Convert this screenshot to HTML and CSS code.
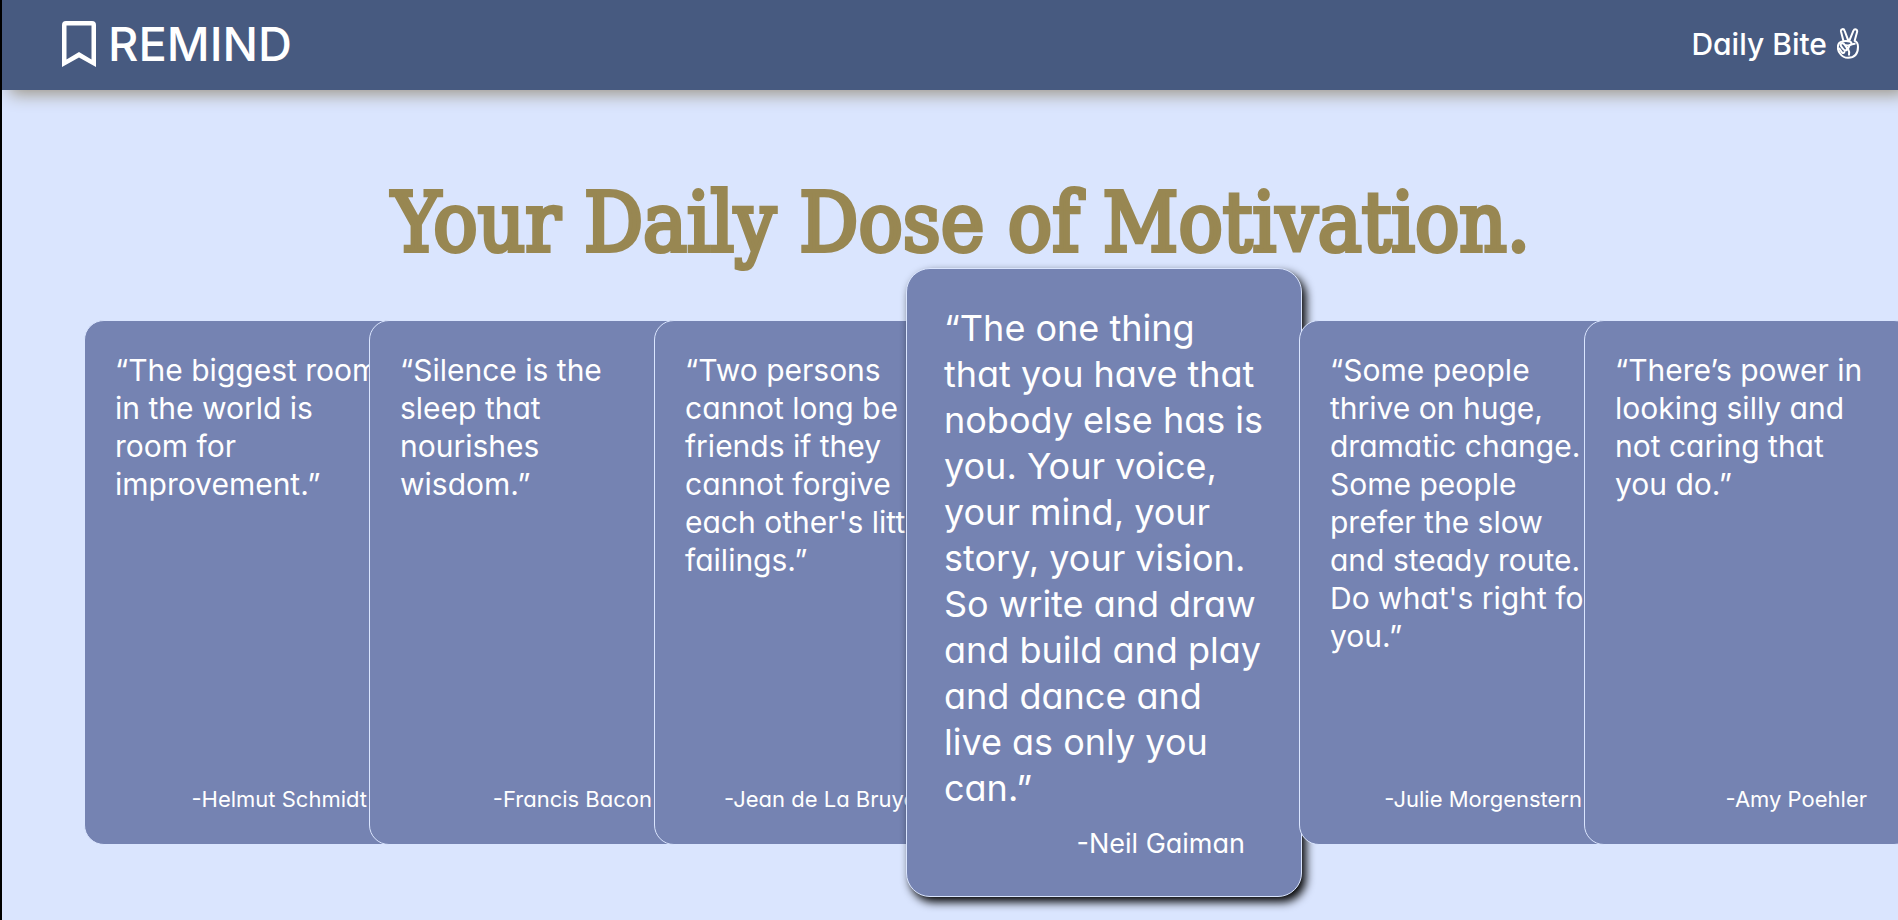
FILE: index.html
```
<!DOCTYPE html>
<html lang="en">
<head>
<meta charset="utf-8">
<title>Remind</title>
<link rel="stylesheet" href="styles.css">
</head>
<body>
<header class="topbar">
  <a class="brand" href="#">
    <svg class="brand-icon" viewBox="0 0 34 46" aria-hidden="true"><path fill="currentColor" fill-rule="evenodd" d="M0 46V4Q0 0 4 0H30Q34 0 34 4V46L17 36.5ZM4.5 4.5V38.5L17 31L29.5 38.5V4.5Z"/></svg>
    <span>REMIND</span>
  </a>
  <a class="daily" href="#">
    <span>Daily Bite</span>
    <svg class="hand-icon" viewBox="0 0 66 92" aria-hidden="true" fill="none" stroke="currentColor" stroke-width="6" stroke-linejoin="round" stroke-linecap="round">
      <path d="M19 37L12 10Q11 4 16 3Q21 2 23 8L33 35H38L49 8Q52 2 57 4Q62 6 60 12L53 38Q63 42 63 56Q63 89 33 89Q18 89 9 76Q1 66 3 53Q4 44 12 41Q26 36 38 40Q46 43 42 49Q37 53 27 51"/>
      <path d="M12 54Q9 47 15 45Q20 44 24 51L30 60Q31 66 26 67Q21 67 18 62ZM7 61L15 73Q19 77 22 72M38 51L33 62Q38 71 36 80M42 49L53 47"/>
    </svg>
  </a>
</header>
<main class="content">
  <h1 class="headline">Your Daily Dose of Motivation.</h1>
  <section class="deck" aria-label="Quotes">
    <article class="card">
      <p class="quote">“The biggest room<br>in the world is<br>room for<br>improvement.”</p>
      <p class="author">-Helmut Schmidt</p>
    </article>
    <article class="card">
      <p class="quote">“Silence is the<br>sleep that<br>nourishes<br>wisdom.”</p>
      <p class="author">-Francis Bacon</p>
    </article>
    <article class="card">
      <p class="quote">“Two persons<br>cannot long be<br>friends if they<br>cannot forgive<br>each other's little<br>failings.”</p>
      <p class="author">-Jean de La Bruyere</p>
    </article>
    <article class="card card-active">
      <p class="quote">“The one thing<br>that you have that<br>nobody else has is<br>you. Your voice,<br>your mind, your<br>story, your vision.<br>So write and draw<br>and build and play<br>and dance and<br>live as only you<br>can.”</p>
      <p class="author">-Neil Gaiman</p>
    </article>
    <article class="card">
      <p class="quote">“Some people<br>thrive on huge,<br>dramatic change.<br>Some people<br>prefer the slow<br>and steady route.<br>Do what's right for<br>you.”</p>
      <p class="author">-Julie Morgenstern</p>
    </article>
    <article class="card">
      <p class="quote">“There’s power in<br>looking silly and<br>not caring that<br>you do.”</p>
      <p class="author">-Amy Poehler</p>
    </article>
  </section>
</main>
</body>
</html>
```
FILE: styles.css
```
:root {
  --sky: #dae5fe;
  --navy: #475a80;
  --card: #7583b2;
  --gold: #988752;
}

* { box-sizing: border-box; }

body {
  margin: 0;
  min-height: 100vh;
  border-left: 2px solid #000;
  background: var(--sky);
  color: #fff;
  font-family: Inter, "Open Sans", sans-serif;
  font-feature-settings: "cv11";
  overflow: hidden;
}

h1, p { margin: 0; }

.topbar {
  display: flex;
  align-items: center;
  justify-content: space-between;
  height: 90px;
  padding: 0 39px 3px 60px;
  background: var(--navy);
  box-shadow: 8px 4px 16px #9c9585;
}

.topbar a {
  display: flex;
  align-items: center;
  color: inherit;
  text-decoration: none;
}

.brand {
  gap: 12px;
  font-size: 47px;
  font-weight: 500;
}

.brand-icon { width: 34px; height: 46px; }

.daily {
  gap: 10px;
  font-size: 30px;
  font-weight: 500;
}

.hand-icon { width: 22px; height: 31px; }

.content { padding: 88px 0 20px; }

.headline {
  padding-left: 22px;
  color: var(--gold);
  font: 400 82px/90px "DejaVu Serif Condensed", "DejaVu Serif", serif;
  text-align: center;
  -webkit-text-stroke: 4px var(--gold);
}

.deck {
  display: flex;
  align-items: center;
  padding-left: 82px;
}

.card {
  flex: none;
  display: flex;
  flex-direction: column;
  justify-content: space-between;
  width: 330px;
  min-height: 525px;
  margin-right: -45px;
  padding: 30px 46px 31px 30px;
  border: 1px solid var(--sky);
  border-radius: 20px;
  background: var(--card);
  white-space: nowrap;
}

.quote { font-size: 30px; line-height: 38px; }

.author { font-size: 22px; line-height: 28px; text-align: right; }

.card-active {
  width: 396px;
  min-height: 629px;
  margin: 0 -3px 0 -33px;
  padding: 36px 56px 35px 37px;
  border-radius: 24px;
  box-shadow: 4px 5px 10px #000;
}

.card-active .quote { font-size: 36px; line-height: 46px; }

.card-active .author { font-size: 27px; line-height: 34px; }
```
